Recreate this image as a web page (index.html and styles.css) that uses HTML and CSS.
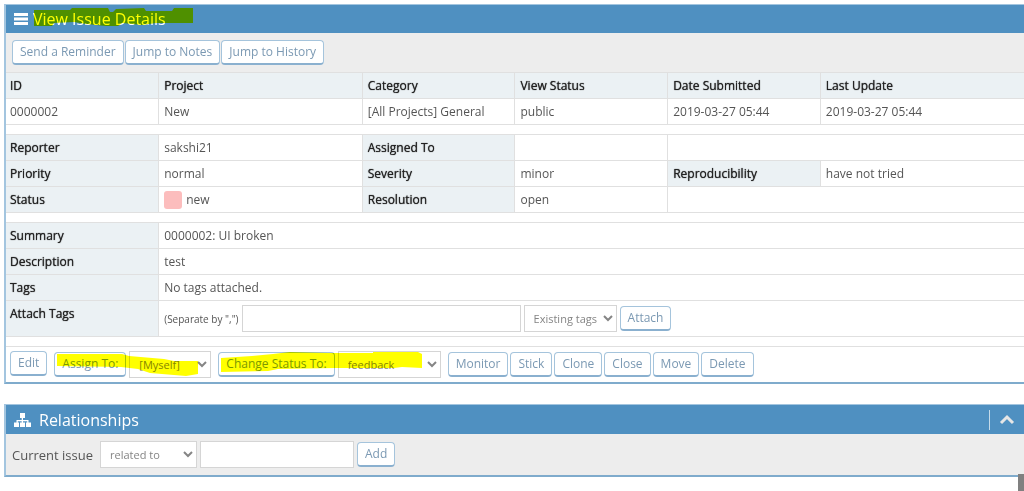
FILE: index.html
```html
<!DOCTYPE html>
<html lang="en">
<head>
<meta charset="utf-8">
<title>View Issue Details</title>
<link rel="stylesheet" href="styles.css">
</head>
<body>
<main class="page">
  <section class="panel">
    <header class="panel-head">
      <svg class="icon-bars" viewBox="0 0 14 12" aria-hidden="true"><path d="M0 0h14v3H0zM0 4.500h14v3H0zM0 9h14v3H0z"/></svg>
      <h1 class="panel-title">View Issue Details</h1>
      <svg class="marker marker-title" viewBox="0 0 160 19" aria-hidden="true"><path d="M0 2L36 2L38 0L74 0L76 4L79 4L82 1L110 0L112 3L138 3L140 0H159V15L122 15L108 17L88 15L84 18L72 18L52 16L40 14L20 15L18 18L0 18Z"/></svg>
    </header>
    <div class="toolbar">
      <button type="button" class="btn">Send a Reminder</button>
      <button type="button" class="btn">Jump to Notes</button>
      <button type="button" class="btn">Jump to History</button>
    </div>
    <table class="details">
      <colgroup><col class="w15"><col class="w20"><col class="w15"><col class="w15"><col class="w15"><col class="w20"></colgroup>
      <tbody>
        <tr><th scope="col">ID</th><th scope="col">Project</th><th scope="col">Category</th><th scope="col">View Status</th><th scope="col">Date Submitted</th><th scope="col">Last Update</th></tr>
        <tr><td>0000002</td><td>New</td><td>[All Projects] General</td><td>public</td><td>2019-03-27 05:44</td><td>2019-03-27 05:44</td></tr>
        <tr class="spacer"><td colspan="6"></td></tr>
        <tr><th scope="row">Reporter</th><td>sakshi21</td><th scope="row">Assigned To</th><td></td><td colspan="2"></td></tr>
        <tr><th scope="row">Priority</th><td>normal</td><th scope="row">Severity</th><td>minor</td><th scope="row">Reproducibility</th><td>have not tried</td></tr>
        <tr><th scope="row">Status</th><td><span class="status"><span class="status-box"></span>new</span></td><th scope="row">Resolution</th><td>open</td><td colspan="2"></td></tr>
        <tr class="spacer"><td colspan="6"></td></tr>
        <tr><th scope="row">Summary</th><td colspan="5">0000002: UI broken</td></tr>
        <tr><th scope="row">Description</th><td colspan="5">test</td></tr>
        <tr><th scope="row">Tags</th><td colspan="5">No tags attached.</td></tr>
        <tr class="attach"><th scope="row">Attach Tags</th><td colspan="5">
          <form class="attach-form">
            <label class="small" for="tags">(Separate by ",")</label>
            <input class="field tags-field" id="tags" type="text">
            <select class="field pick pick-tags" aria-label="Existing tags"><option>Existing tags</option></select>
            <button type="button" class="btn">Attach</button>
          </form>
        </td></tr>
        <tr class="spacer"><td colspan="6"></td></tr>
      </tbody>
    </table>
    <div class="actions">
      <button type="button" class="btn">Edit</button>
      <div class="group">
        <button type="button" class="btn">Assign To:</button>
        <select class="field pick pick-user" aria-label="Assign to"><option>[Myself]</option></select>
        <svg class="marker marker-assign" viewBox="0 0 148 25" aria-hidden="true"><path d="M3 3L68 3L75 5L110 8L120 10L144 10V23L132 25L96 22L84 18L67 16L3 15Z"/></svg>
      </div>
      <div class="group">
        <button type="button" class="btn">Change Status To:</button>
        <select class="field pick pick-status" aria-label="Change status to"><option>feedback</option></select>
        <svg class="marker marker-status" viewBox="0 0 208 25" aria-hidden="true"><path d="M3 7L34 5L55 3L72 1L110 2L155 2V1H200L204 3V17L184 16L176 17L118 17L60 18L50 20L3 21Z"/></svg>
      </div>
      <div class="group group-tight">
        <button type="button" class="btn">Monitor</button>
        <button type="button" class="btn">Stick</button>
        <button type="button" class="btn">Clone</button>
        <button type="button" class="btn">Close</button>
        <button type="button" class="btn">Move</button>
        <button type="button" class="btn">Delete</button>
      </div>
    </div>
  </section>

  <section class="panel">
    <header class="panel-head panel-head-wide">
      <svg class="icon-tree" viewBox="0 0 17 14" aria-hidden="true"><path d="M6 0h5v5H9v2h5.500v2.500H17V14h-5V9.500h1.200V8.300H9v1.200h2V14H6V9.500h1.700V8.300H3.800v1.200H5V14H0V9.500h2.500V7h5.200V5H6z"/></svg>
      <h2 class="panel-title">Relationships</h2>
      <button type="button" class="collapse" aria-label="Collapse"><svg class="icon-up" viewBox="0 0 16 11" aria-hidden="true"><path d="M2 9L8 3L14 9"/></svg></button>
    </header>
    <form class="relations">
      <label class="rel-label" for="rel">Current issue</label>
      <select class="field pick pick-rel" id="rel"><option>related to</option></select>
      <input class="field rel-field" type="text" aria-label="Issue id">
      <button type="button" class="btn">Add</button>
    </form>
  </section>
</main>
<div class="corner"></div>
</body>
</html>
```
FILE: styles.css
```css
* { box-sizing: border-box; }

body {
  margin: 0;
  background: #fff;
  color: #555;
  font-family: "Open Sans", sans-serif;
  font-size: 12px;
  line-height: 18px;
}

.page {
  display: flex;
  flex-direction: column;
  gap: 20px;
  padding: 4px 0 0 4px;
}

.panel {
  border: 1px solid #a3c5df;
  border-left-width: 2px;
  border-right: 0;
  border-bottom: 2px solid #7fabcc;
}

.panel-head {
  position: relative;
  display: flex;
  align-items: center;
  gap: 5px;
  height: 28px;
  padding-left: 8px;
  background: #4f90c1;
  color: #fff;
}

.panel-head-wide { gap: 8px; height: 29px; }

.panel-title {
  margin: 0;
  font-size: 16px;
  font-weight: 400;
  line-height: 28px;
}

.icon-bars { width: 14px; height: 12px; fill: #fff; }
.icon-tree { width: 17px; height: 14px; fill: #fff; }

.marker {
  position: absolute;
  fill: #ff0;
  mix-blend-mode: multiply;
  pointer-events: none;
}

.marker-title { left: 28px; top: 3px; width: 160px; height: 19px; }
.marker-assign { left: 0; top: 0; width: 148px; height: 25px; }
.marker-status { left: 0; top: 0; width: 208px; height: 25px; }

.collapse {
  display: flex;
  align-items: center;
  justify-content: center;
  width: 35px;
  height: 20px;
  margin-left: auto;
  padding: 0;
  border: 0;
  border-left: 1px solid #c5dbea;
  background: none;
}

.icon-up { width: 16px; height: 11px; fill: none; stroke: #e6e6e6; stroke-width: 3; }

.toolbar {
  display: flex;
  gap: 1px;
  padding: 7px 6px;
  background: #ededed;
}

.btn {
  height: 25px;
  padding: 0 7px;
  border: 1px solid #a5c4dc;
  border-bottom: 2px solid #8ab0cf;
  border-radius: 4px;
  background: #fff;
  color: #7b99b3;
  font: 12px/20px "Open Sans", sans-serif;
  white-space: nowrap;
}

.details {
  width: 100%;
  table-layout: fixed;
  border-collapse: collapse;
}

.w15 { width: 15%; }
.w20 { width: 20%; }

.details th,
.details td {
  height: 26px;
  padding: 1px 4px 0 5px;
  border: 1px solid #e0e0e0;
  text-align: left;
  vertical-align: middle;
}

.details th:first-child,
.details td:first-child { padding-left: 4px; border-left: 0; }
.details th:last-child,
.details td:last-child { border-right: 0; }

.details th {
  background: #ebf1f4;
  color: #222;
  font-weight: 400;
  text-shadow: 0 0 1px #222;
}

.details .spacer td { height: 10px; padding: 0; }

.details .attach th,
.details .attach td { height: 36px; vertical-align: top; padding-top: 4px; }

.status { display: flex; align-items: center; gap: 4px; }
.status-box { width: 18px; height: 18px; border-radius: 3px; background: #fcbdbd; }

.attach-form { display: flex; align-items: center; gap: 3px; }
.small { font-size: 10px; white-space: nowrap; }

.field {
  height: 27px;
  margin: 0;
  border: 1px solid #d5d5d5;
  border-radius: 0;
  background: #fff;
  color: #858585;
  font: 11px/20px "Open Sans", sans-serif;
}

.pick { padding: 0 0 0 5px; }

.tags-field { width: 279px; }
.pick-tags { width: 93px; }
.pick-user { width: 82px; }
.pick-status { width: 103px; }
.pick-rel { width: 97px; }
.rel-field { width: 154px; }

.actions {
  display: flex;
  gap: 7px;
  padding: 4px;
}

.group {
  position: relative;
  display: flex;
  align-items: center;
  gap: 3px;
}

.group-tight { gap: 2px; }

.relations {
  display: flex;
  align-items: center;
  gap: 3px;
  padding: 7px 6px;
  background: #ededed;
}

.rel-label { margin-right: 4px; font-size: 13px; }

.corner {
  position: fixed;
  right: 0;
  bottom: 0;
  width: 6px;
  height: 17px;
  background: #808080;
}
```
